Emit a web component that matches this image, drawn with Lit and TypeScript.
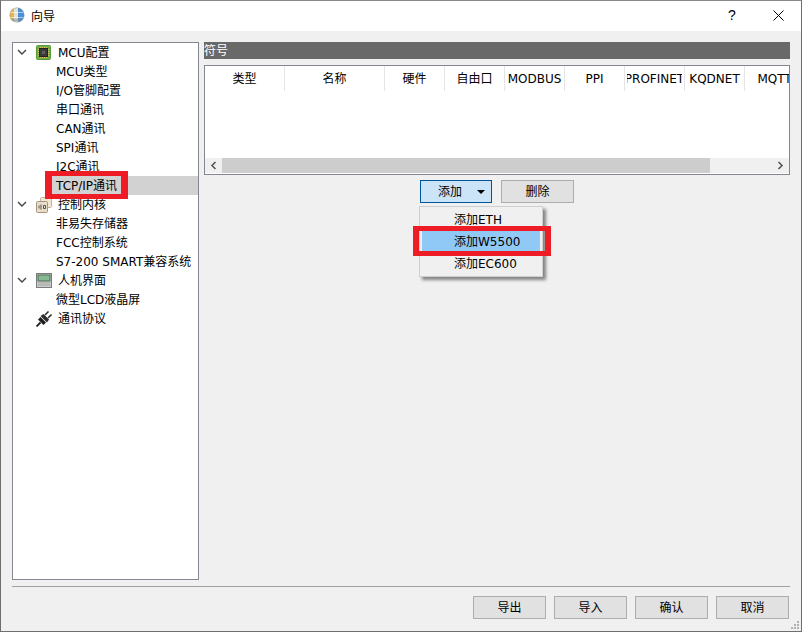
import { LitElement, html, css } from "lit";
import { customElement } from "lit/decorators.js";

const chip = html`<svg class="ico" width="16" height="16" viewBox="0 0 16 16"><rect x="0.5" y="0.5" width="14" height="14" rx="1" fill="#6fb04a" stroke="#5d9a3c"/><path d="M4 2.5h7M4 12.5h7M2.5 4v7M12.5 4v7" stroke="#d8c15a" stroke-dasharray="1 1"/><rect x="3.5" y="3.5" width="8" height="8" fill="#3a3a3a" stroke="#222"/><rect x="6" y="6" width="3" height="3" fill="#5f5f5f"/></svg>`;
const core = html`<svg class="ico" width="16" height="16" viewBox="0 0 16 16"><rect x="4.5" y="0.5" width="11" height="10" rx="1" fill="#f0e6d6" stroke="#c5b49a"/><rect x="0.5" y="4.5" width="11" height="11" rx="1" fill="#e8dccb" stroke="#a8967a"/><path d="M3 8.5v3M5 7.5v5M7.5 8.5h2v3h-2z" stroke="#555" fill="none"/></svg>`;
const hmi = html`<svg class="ico" width="16" height="16" viewBox="0 0 16 16"><rect x="0.5" y="0.5" width="15" height="14" fill="#c9ccc8" stroke="#7b7b7b"/><rect x="2" y="2" width="12" height="6" fill="#86b892" stroke="#4f6f58"/><path d="M2.5 10h11M2.5 12h11" stroke="#858585" stroke-dasharray="1 1"/></svg>`;
const plug = html`<svg class="ico" width="16" height="16" viewBox="0 0 16 16"><path d="M0.5 15.5L4.5 11.5" stroke="#222" stroke-width="1.8"/><path d="M2 8.5L7.5 14L10 11.5L4.5 6Z" fill="#1e1e1e"/><path d="M4.5 5L11 11.5L13 8.5L7.5 3Z" fill="#2c2c2c"/><path d="M9 4L12.5 0.5M12 7L15.5 3.5" stroke="#333" stroke-width="1.6"/></svg>`;
const chevron = html`<svg class="exp" width="10" height="6" viewBox="0 0 10 6"><path d="M1 1L5 5L9 1" fill="none" stroke="#444" stroke-width="1.4"/></svg>`;

const tree: { t: string; icon?: any; sel?: boolean; exp?: boolean }[] = [
  { t: "MCU配置", icon: chip, exp: true },
  { t: "MCU类型" }, { t: "I/O管脚配置" }, { t: "串口通讯" }, { t: "CAN通讯" }, { t: "SPI通讯" }, { t: "I2C通讯" },
  { t: "TCP/IP通讯", sel: true },
  { t: "控制内核", icon: core, exp: true },
  { t: "非易失存储器" }, { t: "FCC控制系统" }, { t: "S7-200 SMART兼容系统" },
  { t: "人机界面", icon: hmi, exp: true },
  { t: "微型LCD液晶屏" },
  { t: "通讯协议", icon: plug },
];
const cols = [
  ["类型", 80], ["名称", 100], ["硬件", 60], ["自由口", 60], ["MODBUS", 60], ["PPI", 60], ["PROFINET", 60], ["KQDNET", 60], ["MQTT", 60],
] as [string, number][];

@customElement("app-root")
export class AppRoot extends LitElement {
  static styles = css`
    :host { display: block; width: 802px; height: 632px; font-family: "DejaVu Sans", "Noto Sans CJK SC", sans-serif; font-size: 12px; color: #000; }
    * { box-sizing: border-box; }
    .win { position: relative; width: 802px; height: 632px; background: #f0f0f0; border: 1px solid #6e6e6e; border-top-color: #8a8a8a; display: flex; flex-direction: column; overflow: hidden; }
    .title { height: 30px; flex: none; background: #fff; display: flex; align-items: center; padding: 0 0 2px 8px; gap: 6px; font-size: 12px; }
    .title .ctl { margin-left: auto; display: flex; align-items: center; }
    .q { width: 46px; text-align: center; font: 14px "Liberation Sans", sans-serif; }
    .x { width: 46px; display: flex; justify-content: center; }
    .main { flex: 1; display: flex; flex-direction: column; padding: 11px 11px 0 11px; min-height: 0; }
    .content { display: flex; gap: 5px; height: 538px; flex: none; }
    .tree { width: 187px; flex: none; border: 1px solid #828790; background: #fff; overflow: hidden; }
    .row { height: 19px; display: flex; align-items: center; white-space: nowrap; position: relative; font-size: 12px; line-height: 19px; padding-top: 1px; }
    .row.sel { background: #d2d2d2; margin-left: 34px; padding-left: 9px; }
    .leaf { padding-left: 43px; }
    .top { padding-left: 23px; }
    .exp { position: absolute; left: 4px; top: 6px; }
    .ico { margin-right: 6px; flex: none; margin-top: -1px; }
    .right { flex: 1; min-width: 0; display: flex; flex-direction: column; position: relative; }
    .band { height: 17px; background: #696969; color: #fff; line-height: 17px; padding-top: 1px; font-size: 12px; flex: none; overflow: hidden; }
    .tbl { margin-top: 6px; height: 110px; flex: none; border: 1px solid #828790; background: #fff; display: flex; flex-direction: column; overflow: hidden; }
    .head { display: flex; height: 25px; flex: none; overflow: hidden; }
    .hc { flex: none; height: 25px; border-right: 1px solid #e5e5e5; display: flex; overflow: hidden; white-space: nowrap; line-height: 25px; padding-top: 1px; }
    .clip { flex: 1; min-width: 0; margin: 0 2px; display: flex; justify-content: center; align-items: center; overflow: hidden; }
    .clip span { flex: none; }
    .body { flex: 1; }
    .sb { height: 15px; flex: none; background: #f0f0f0; display: flex; margin-bottom: 1px; }
    .sb .arr { width: 17px; flex: none; display: flex; align-items: center; justify-content: center; }
    .thumb { width: 488px; background: #cdcdcd; }
    .rest { flex: 1; }
    .acts { display: flex; margin-top: 5px; gap: 9px; padding-left: 216px; }
    .btn { width: 73px; height: 23px; background: #e1e1e1; border: 1px solid #adadad; display: flex; align-items: center; justify-content: center; font-size: 12px; line-height: 19px; padding-top: 1px; }
    .btn.drop { width: 72px; background: #cce4f7; border-color: #005499; position: relative; padding-right: 12px; }
    .caret { position: absolute; right: 6px; top: 9px; width: 0; height: 0; border-left: 4px solid transparent; border-right: 4px solid transparent; border-top: 4px solid #000; }
    .menu { position: absolute; left: 215px; top: 164px; width: 124px; height: 71px; background: #f0f0f0; border: 1px solid #cfcfcf; box-shadow: 3px 3px 3px rgba(0,0,0,.45); padding: 1px 1px; }
    .mi { height: 22px; display: flex; align-items: center; padding: 2px 0 0 32px; font-size: 12px; margin: 0 1px; line-height: 19px; }
    .mi.on { background: #90c8f6; }
    .mark { position: absolute; border-style: solid; border-color: #ee1c25; pointer-events: none; }
    .m1 { left: 44px; top: 170px; width: 83px; height: 28px; border-width: 5px 7px; }
    .m2 { left: 412px; top: 225px; width: 138px; height: 30px; border-width: 5px 6px; }
    .sep { height: 1px; background: #a0a0a0; margin-top: 6px; flex: none; }
    .foot { display: flex; justify-content: flex-end; gap: 8px; margin-top: 9px; padding-right: 1px; }
    .grip { position: absolute; right: 1px; bottom: 1px; }
  `;

  render() {
    return html`<div class="win">
      <div class="title">
        <svg width="16" height="16" viewBox="0 0 16 16"><defs><clipPath id="c"><circle cx="8" cy="8" r="7"/></clipPath></defs><circle cx="8" cy="8" r="7.5" fill="#8a9aa8"/><g clip-path="url(#c)"><rect width="6" height="16" fill="#e8b44c"/><rect x="5" width="4" height="16" fill="#e2e4d0"/><rect x="9" width="7" height="16" fill="#4a8fd8"/><path d="M0 5.5h16M0 10.5h16" stroke="#fff" stroke-opacity=".55"/><path d="M0 13h16" stroke="#7b8894" stroke-width="3" stroke-opacity=".5"/></g></svg>
        <span>向导</span>
        <div class="ctl"><div class="q">?</div><div class="x"><svg width="11" height="11" viewBox="0 0 11 11"><path d="M0.5 0.5L10.5 10.5M10.5 0.5L0.5 10.5" stroke="#000"/></svg></div></div>
      </div>
      <div class="main">
        <div class="content">
          <div class="tree">
            ${tree.map((r) => r.icon
              ? html`<div class="row top">${r.exp ? chevron : ""}${r.icon}<span>${r.t}</span></div>`
              : r.sel
                ? html`<div class="row sel">${r.t}</div>`
                : html`<div class="row leaf">${r.t}</div>`)}
          </div>
          <div class="right">
            <div class="band">符号</div>
            <div class="tbl">
              <div class="head">${cols.map(([t, w]) => html`<div class="hc" style="width:${w}px"><div class="clip"><span>${t}</span></div></div>`)}</div>
              <div class="body"></div>
              <div class="sb">
                <div class="arr"><svg width="7" height="9" viewBox="0 0 7 9"><path d="M5.5 1L2 4.5L5.5 8" fill="none" stroke="#555" stroke-width="1.6"/></svg></div>
                <div class="thumb"></div>
                <div class="rest"></div>
                <div class="arr"><svg width="7" height="9" viewBox="0 0 7 9"><path d="M1.5 1L5 4.5L1.5 8" fill="none" stroke="#555" stroke-width="1.6"/></svg></div>
              </div>
            </div>
            <div class="acts">
              <div class="btn drop">添加<i class="caret"></i></div>
              <div class="btn">删除</div>
            </div>
            <div class="menu">
              <div class="mi">添加ETH</div>
              <div class="mi on">添加W5500</div>
              <div class="mi">添加EC600</div>
            </div>
          </div>
        </div>
        <div class="sep"></div>
        <div class="foot">
          <div class="btn">导出</div><div class="btn">导入</div><div class="btn">确认</div><div class="btn">取消</div>
        </div>
      </div>
      <svg class="grip" width="10" height="10" viewBox="0 0 10 10" fill="#b0b0b0"><rect x="7" y="1" width="2" height="2"/><rect x="4" y="4" width="2" height="2"/><rect x="7" y="4" width="2" height="2"/><rect x="1" y="7" width="2" height="2"/><rect x="4" y="7" width="2" height="2"/><rect x="7" y="7" width="2" height="2"/></svg>
      <div class="mark m1"></div>
      <div class="mark m2"></div>
    </div>`;
  }
}
